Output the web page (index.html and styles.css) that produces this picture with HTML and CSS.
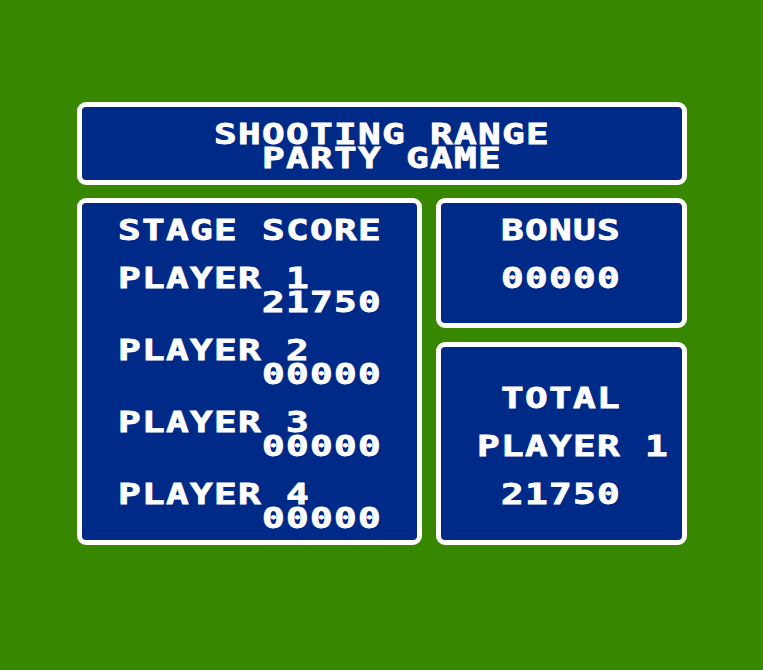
FILE: index.html
```html
<!DOCTYPE html>
<html lang="en">
<head>
    <meta charset="UTF-8">
    <meta name="viewport" content="width=device-width, initial-scale=1.0">
    <title>Shooting Range - Results</title>
    <link rel="stylesheet" href="styles.css">
</head>
<body>
    <div class="screen">
        <div class="panel title">
            <div class="line col-4">SHOOTING RANGE</div>
            <div class="line col-6">PARTY GAME</div>
        </div>

        <div class="results">
            <!-- Punkte pro Spieler -->
            <div class="panel stage">
                <div class="line">STAGE SCORE</div>
                <div class="line skip">PLAYER 1</div>
                <div class="line col-6">21750</div>
                <div class="line skip">PLAYER 2</div>
                <div class="line col-6">00000</div>
                <div class="line skip">PLAYER 3</div>
                <div class="line col-6">00000</div>
                <div class="line skip">PLAYER 4</div>
                <div class="line col-6">00000</div>
            </div>

            <div class="side">
                <div class="panel bonus">
                    <div class="line col-1">BONUS</div>
                    <div class="line col-1 skip">00000</div>
                </div>
                <div class="panel total">
                    <div class="line col-1">TOTAL</div>
                    <div class="line skip">PLAYER 1</div>
                    <div class="line col-1 skip">21750</div>
                </div>
            </div>
        </div>
    </div>
</body>
</html>
```

FILE: styles.css
```css
* {
    box-sizing: border-box;
    margin: 0;
    padding: 0;
}

body {
    background: #388700;
    min-height: 100vh;
    font-family: 'DejaVu Sans Mono', 'Liberation Mono', monospace;
    font-weight: bold;
    font-size: 29px;
    color: #fffeff;
}

.screen {
    width: 610px;
    margin-left: 77px;
    padding-top: 102px;
    display: flex;
    flex-direction: column;
    gap: 13px;
}

.panel {
    background: #002a88;
    border: 5px solid #fffeff;
    border-radius: 9px;
    padding-left: 36px;
}

.title {
    height: 83px;
    padding-top: 15px;
}

.results {
    display: flex;
    gap: 14px;
}

.stage {
    width: 345px;
    height: 347px;
    padding-top: 15px;
}

.side {
    width: 251px;
    display: flex;
    flex-direction: column;
    gap: 14px;
}

.bonus {
    height: 130px;
    padding-top: 15px;
}

.total {
    height: 203px;
    padding-top: 39px;
}

/* eine Zeile = 8px Kachel, 24px Raster */
.line {
    width: max-content;
    height: 24px;
    line-height: 24px;
    white-space: pre;
    letter-spacing: 1px;
    -webkit-text-stroke: 0.8px #fffeff;
    transform: scaleX(1.3);
    transform-origin: left center;
}

.skip {
    margin-top: 24px;
}

.col-1 { margin-left: 24px; }
.col-4 { margin-left: 96px; }
.col-6 { margin-left: 144px; }
```
